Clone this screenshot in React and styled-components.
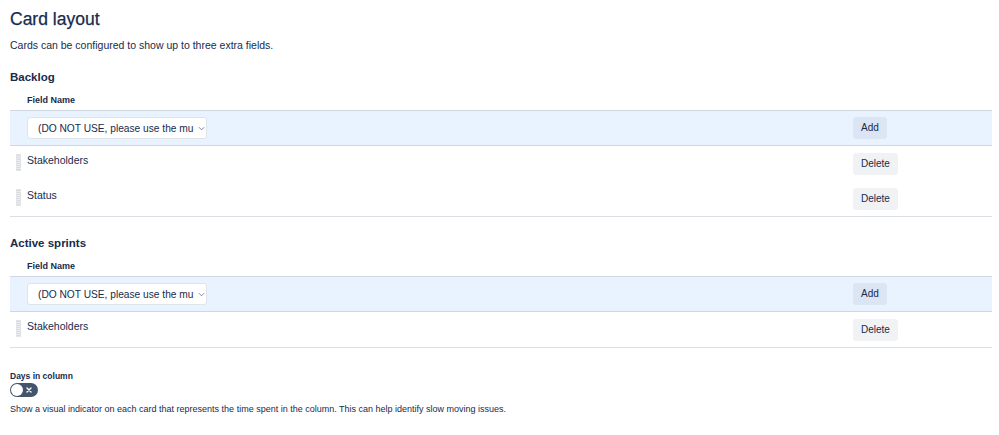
import React from "react";
import styled, { createGlobalStyle } from "styled-components";

const Global = createGlobalStyle`
  html, body { margin: 0; padding: 0; background: #fff; }
  body { font-family: "Liberation Sans", Arial, sans-serif; color: #172B4D; }
  * { box-sizing: border-box; }
`;

const Page = styled.div`
  padding: 8px 7px 0 10px;
  display: flex;
  flex-direction: column;
`;

const Title = styled.h1`
  margin: 0;
  font-size: 17.5px;
  line-height: 22px;
  font-weight: 500;
  color: #172B4D;
  -webkit-text-stroke: 0.25px #172B4D;
`;

const Lead = styled.p`
  margin: 8px 0 0;
  font-size: 10.5px;
  line-height: 14px;
`;

const SectionTitle = styled.h2`
  margin: ${(p) => p.$top}px 0 0;
  font-size: 11.5px;
  line-height: 16px;
  font-weight: 700;
`;

const Table = styled.div`
  display: flex;
  flex-direction: column;
  border-bottom: 1px solid #dcdfe4;
`;

const Grid = styled.div`
  display: grid;
  grid-template-columns: 17px 1fr 139px;
  align-items: center;
`;

const HeadRow = styled(Grid)`
  height: 25px;
  align-items: end;
  padding-bottom: 4px;
`;

const HeadCell = styled.div`
  grid-column: 2;
  font-size: 9px;
  font-weight: 700;
  line-height: 12px;
`;

const AddRow = styled(Grid)`
  height: 36px;
  background: #e9f2ff;
  border-top: 1px solid #cfd7e3;
  border-bottom: 1px solid #cfd7e3;
`;

const FieldRow = styled(Grid)`
  height: 35px;
`;

const Handle = styled.div`
  width: 5px;
  height: 17px;
  margin-left: 6px;
  margin-top: -2px;
  background-color: #eceef1;
  background-image: repeating-linear-gradient(
    to bottom,
    #d6d9de 0,
    #d6d9de 1px,
    transparent 1px,
    transparent 2px
  );
  border: 1px solid #e2e4e8;
`;

const FieldName = styled.div`
  font-size: 10.5px;
  line-height: 14px;
  margin-top: -8px;
`;

const SelectBox = styled.div`
  width: 180px;
  height: 22px;
  background: #fff;
  border: 1px solid #dfe3ea;
  border-radius: 3px;
  display: flex;
  align-items: center;
  justify-content: space-between;
  padding: 0 6px 0 10px;
  font-size: 10.2px;
  white-space: nowrap;
  overflow: hidden;
`;

const Chevron = styled.svg`
  width: 7px;
  height: 7px;
  flex: none;
  margin-left: 4px;
`;

const Button = styled.button`
  justify-self: start;
  height: 22px;
  padding: 0 8px;
  border: none;
  border-radius: 3px;
  background: rgba(9, 30, 66, 0.06);
  color: #172B4D;
  font-family: inherit;
  font-size: 10px;
  line-height: 22px;
  cursor: pointer;
`;

const Label = styled.div`
  margin-top: 22px;
  font-size: 8.5px;
  line-height: 12px;
  font-weight: 700;
`;

const Toggle = styled.div`
  position: relative;
  width: 28px;
  height: 14px;
  margin-top: 1px;
  border-radius: 7px;
  background: #44546f;
  display: flex;
  align-items: center;
  justify-content: flex-end;
  padding-right: 6px;
`;

const Knob = styled.span`
  position: absolute;
  left: 1px;
  top: 1px;
  width: 12px;
  height: 12px;
  border-radius: 50%;
  background: #fff;
`;

const Help = styled.p`
  margin: 6px 0 0;
  font-size: 9px;
  line-height: 12px;
`;

function Section({ title, top, fields }) {
  return (
    <>
      <SectionTitle $top={top}>{title}</SectionTitle>
      <Table>
        <HeadRow>
          <HeadCell>Field Name</HeadCell>
        </HeadRow>
        <AddRow>
          <span />
          <SelectBox>
            <span>(DO NOT USE, please use the mu</span>
            <Chevron viewBox="0 0 8 8">
              <path d="M1 2.5 L4 5.5 L7 2.5" fill="none" stroke="#6b778c" strokeWidth="1" />
            </Chevron>
          </SelectBox>
          <Button>Add</Button>
        </AddRow>
        {fields.map((f) => (
          <FieldRow key={f}>
            <Handle />
            <FieldName>{f}</FieldName>
            <Button>Delete</Button>
          </FieldRow>
        ))}
      </Table>
    </>
  );
}

export default function App() {
  return (
    <>
      <Global />
      <Page>
        <Title>Card layout</Title>
        <Lead>Cards can be configured to show up to three extra fields.</Lead>
        <Section title="Backlog" top={17} fields={["Stakeholders", "Status"]} />
        <Section title="Active sprints" top={18} fields={["Stakeholders"]} />
        <Label>Days in column</Label>
        <Toggle>
          <Knob />
          <svg width="6" height="6" viewBox="0 0 6 6">
            <path d="M1 1 L5 5 M5 1 L1 5" stroke="#fff" strokeWidth="1.4" strokeLinecap="round" />
          </svg>
        </Toggle>
        <Help>
          Show a visual indicator on each card that represents the time spent in the column. This can help identify slow moving issues.
        </Help>
      </Page>
    </>
  );
}
